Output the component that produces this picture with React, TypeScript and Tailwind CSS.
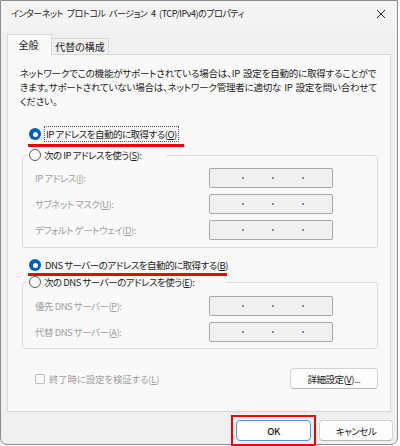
import React from 'react';

const font = "font-['Noto_Sans_CJK_JP','Noto_Sans',sans-serif] [font-feature-settings:'palt']";

const Radio = ({ checked }: { checked?: boolean }) =>
  checked ? (
    <span className="w-[12px] h-[12px] rounded-full bg-[#005fb8] flex items-center justify-center shrink-0">
      <span className="w-[5px] h-[5px] rounded-full bg-white" />
    </span>
  ) : (
    <span className="w-[12px] h-[12px] rounded-full border border-[#5c5c5c] bg-[#f7f7f7] shrink-0" />
  );

const IpField = () => (
  <div className="w-[124px] h-[20px] border border-[#a6a6a6] rounded-[2px] bg-[#f0f0f0] flex items-center">
    <span className="w-[1.5px] h-[1.5px] bg-[#7d90ac] ml-[32px]" />
    <span className="w-[1.5px] h-[1.5px] bg-[#7d90ac] ml-[28.5px]" />
    <span className="w-[1.5px] h-[1.5px] bg-[#7d90ac] ml-[28.5px]" />
  </div>
);

const FieldRow = ({ label, keyChar, rest }: { label: string; keyChar: string; rest: string }) => (
  <div className="flex items-center justify-between h-[20px] pl-[12px] pr-[44px]">
    <span className="text-[#a0a0a0]">
      {label}(<u>{keyChar}</u>){rest}
    </span>
    <IpField />
  </div>
);

const GroupBox = ({ legend, legendWidth, children }: { legend: React.ReactNode; legendWidth: string; children: React.ReactNode }) => (
  <div className="relative ml-[14px] mr-[12px] border border-[#dcdcdc] rounded-[3px]">
    <div className={`absolute top-[-9px] left-[5px] h-[16px] bg-[#f9f9f9] flex items-center gap-[3px] pl-[1px] ${legendWidth}`}>
      <Radio />
      <span className="text-[#1b1b1b]">{legend}</span>
    </div>
    {children}
  </div>
);

export default function App() {
  return (
    <div className={`w-[400px] h-[446px] bg-white text-[9.5px] leading-[14px] tracking-[-0.5px] ${font}`}>
      <div className="w-[398px] h-[445px] border border-[#8c8c8c] rounded-b-[7px] bg-[#f0f0f0] flex flex-col text-[#1b1b1b]">
        {/* タイトルバー */}
        <div className="h-[30px] flex items-center justify-between pl-[10px] pr-[7px] bg-[#f3f3f3]">
          <span className="mt-[-4px] text-[9px] tracking-[-0.45px] [word-spacing:2px]">
            インターネット プロトコル バージョン 4 (TCP/IPv4)のプロパティ
          </span>
          <svg width="10" height="10" viewBox="0 0 10 10" className="mr-[4px] mt-[-4px]">
            <path d="M1 1L9 9M9 1L1 9" stroke="#222" strokeWidth="1" />
          </svg>
        </div>

        {/* タブ */}
        <div className="flex items-end h-[22px] ml-[6px] mt-[1px] relative z-10 text-[10px] tracking-normal">
          <div className="h-[21px] w-[45px] border border-b-0 border-[#d9d9d9] bg-[#f9f9f9] flex items-center justify-center pr-[2px] translate-y-[1px]">
            全般
          </div>
          <div className="h-[16px] w-[57px] border border-l-0 border-b-0 border-[#d9d9d9] bg-[#f0f0f0] flex items-center justify-center">
            代替の構成
          </div>
        </div>

        {/* タブパネル */}
        <div className="mx-[6px] h-[358px] border border-[#d9d9d9] bg-[#f9f9f9] flex flex-col">
          <p className="mt-[11px] ml-[12px] leading-[14px] whitespace-nowrap tracking-[-0.2px] [word-spacing:1px]">
            ネットワークでこの機能がサポートされている場合は、IP 設定を自動的に取得することがで
            <br />
            きます。サポートされていない場合は、ネットワーク管理者に適切な IP 設定を問い合わせて
            <br />
            ください。
          </p>

          <div className="relative flex items-center h-[16px] mt-[18px] ml-[21px] gap-[3px]">
            <Radio checked />
            <span className="border border-dotted border-[#555] px-[1px] leading-[14px]">
              IP アドレスを自動的に取得する(<u>O</u>)
            </span>
            <div className="absolute left-[-1px] top-[18px] w-[156px] h-[2.5px] bg-[#f00000] z-10" />
          </div>

          <div className="mt-[13px]">
            <GroupBox
              legendWidth="w-[138px]"
              legend={<>次の IP アドレスを使う(<u>S</u>):</>}
            >
              <div className="flex flex-col gap-[6px] pt-[12px] pb-[7px]">
                <FieldRow label="IP アドレス" keyChar="I" rest=":" />
                <FieldRow label="サブネット マスク" keyChar="U" rest=":" />
                <FieldRow label="デフォルト ゲートウェイ" keyChar="D" rest=":" />
              </div>
            </GroupBox>
          </div>

          <div className="relative flex items-center h-[16px] mt-[9px] ml-[21px] gap-[4px] z-10">
            <Radio checked />
            <span>
              DNS サーバーのアドレスを自動的に取得する(<u>B</u>)
            </span>
            <div className="absolute left-[-1px] top-[16px] w-[199px] h-[2.5px] bg-[#f00000]" />
          </div>

          <div className="mt-[9px]">
            <GroupBox
              legendWidth="w-[198px]"
              legend={<>次の DNS サーバーのアドレスを使う(<u>E</u>):</>}
            >
              <div className="flex flex-col gap-[6px] pt-[13px] pb-[6px]">
                <FieldRow label="優先 DNS サーバー" keyChar="P" rest=":" />
                <FieldRow label="代替 DNS サーバー" keyChar="A" rest=":" />
              </div>
            </GroupBox>
          </div>

          <div className="flex items-center justify-between mt-[19px] ml-[27px] mr-[12px]">
            <div className="flex items-center gap-[4px] text-[#a0a0a0]">
              <span className="w-[10px] h-[10px] border border-[#bdbdbd] rounded-[2px] bg-[#f9f9f9]" />
              <span className="tracking-[-0.2px]">
                終了時に設定を検証する(<u>L</u>)
              </span>
            </div>
            <button className="w-[88px] h-[21px] rounded-[4px] border border-[#d3d3d3] border-b-[#b5b5b5] bg-[#fdfdfd] text-[#1b1b1b]">
              詳細設定(<u>V</u>)...
            </button>
          </div>
        </div>

        {/* 下部ボタン */}
        <div className="flex justify-end gap-[8px] mt-[8px] mr-[4px]">
          <div className="relative">
            <button className="w-[75px] h-[21px] rounded-[4px] border border-[#4f96d8] bg-[#fdfdfd] font-medium">
              OK
            </button>
            <div className="absolute left-[-5px] top-[-5px] w-[85px] h-[31px] border-[2.5px] border-[#f00000]" />
          </div>
          <button className="w-[74px] h-[21px] rounded-[4px] border border-[#d3d3d3] border-b-[#b5b5b5] bg-[#fdfdfd]">
            キャンセル
          </button>
        </div>
      </div>
    </div>
  );
}
